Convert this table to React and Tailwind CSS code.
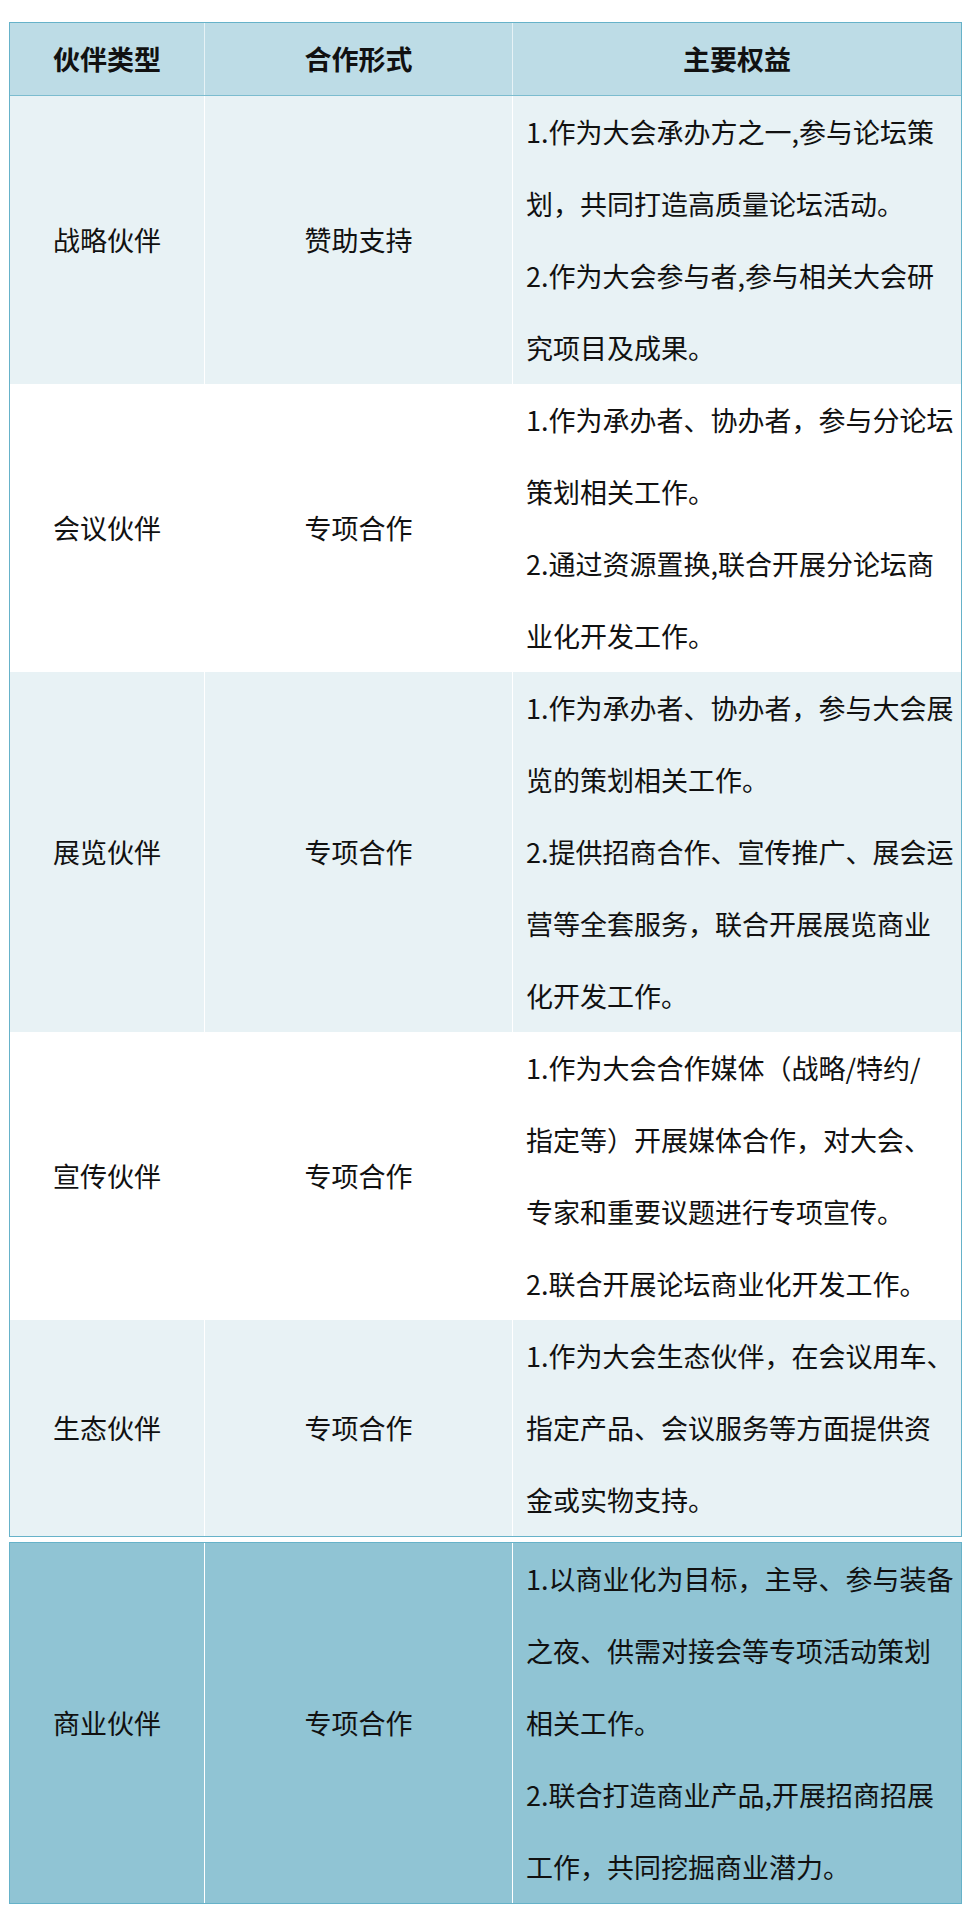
import React from "react";

const rows = [
  {
    type: "战略伙伴",
    form: "赞助支持",
    bg: "bg-[#e8f2f5]",
    lines: [
      "1.作为大会承办方之一,参与论坛策",
      "划，共同打造高质量论坛活动。",
      "2.作为大会参与者,参与相关大会研",
      "究项目及成果。",
    ],
  },
  {
    type: "会议伙伴",
    form: "专项合作",
    bg: "bg-white",
    lines: [
      "1.作为承办者、协办者，参与分论坛",
      "策划相关工作。",
      "2.通过资源置换,联合开展分论坛商",
      "业化开发工作。",
    ],
  },
  {
    type: "展览伙伴",
    form: "专项合作",
    bg: "bg-[#e8f2f5]",
    lines: [
      "1.作为承办者、协办者，参与大会展",
      "览的策划相关工作。",
      "2.提供招商合作、宣传推广、展会运",
      "营等全套服务，联合开展展览商业",
      "化开发工作。",
    ],
  },
  {
    type: "宣传伙伴",
    form: "专项合作",
    bg: "bg-white",
    lines: [
      "1.作为大会合作媒体（战略/特约/",
      "指定等）开展媒体合作，对大会、",
      "专家和重要议题进行专项宣传。",
      "2.联合开展论坛商业化开发工作。",
    ],
  },
  {
    type: "生态伙伴",
    form: "专项合作",
    bg: "bg-[#e8f2f5]",
    lines: [
      "1.作为大会生态伙伴，在会议用车、",
      "指定产品、会议服务等方面提供资",
      "金或实物支持。",
    ],
  },
];

const business = {
  type: "商业伙伴",
  form: "专项合作",
  bg: "bg-[#90c4d4]",
  lines: [
    "1.以商业化为目标，主导、参与装备",
    "之夜、供需对接会等专项活动策划",
    "相关工作。",
    "2.联合打造商业产品,开展招商招展",
    "工作，共同挖掘商业潜力。",
  ],
};

const Row = ({ row }) => (
  <div className={`grid grid-cols-[195px_308px_1fr] ${row.bg}`}>
    <div className="flex items-center justify-center border-r border-white">
      {row.type}
    </div>
    <div className="flex items-center justify-center border-r border-white">
      {row.form}
    </div>
    <div className="pl-[13px] pr-[4px]">
      {row.lines.map((line, i) => (
        <div key={i} className="whitespace-nowrap">
          {line}
        </div>
      ))}
    </div>
  </div>
);

export default function App() {
  return (
    <div
      className="min-h-[1908px] bg-white pt-[22px] text-[27px] leading-[72px] text-[#111]"
      style={{ fontFamily: '"Noto Sans CJK SC", "Noto Sans", sans-serif' }}
    >
      {/* main table */}
      <div className="ml-[9px] w-[953px] border border-[#66b2c9]">
        <div className="grid grid-cols-[195px_308px_1fr] border-b border-[#7bbccf] bg-[#bddce6] font-bold">
          <div className="text-center border-r border-[#e6f2f6]">伙伴类型</div>
          <div className="text-center border-r border-[#e6f2f6]">合作形式</div>
          <div className="text-center">主要权益</div>
        </div>
        {rows.map((row) => (
          <Row key={row.type} row={row} />
        ))}
      </div>

      {/* business partner */}
      <div className="ml-[9px] mt-[5px] w-[953px] border border-[#66b2c9]">
        <Row row={business} />
      </div>
    </div>
  );
}
